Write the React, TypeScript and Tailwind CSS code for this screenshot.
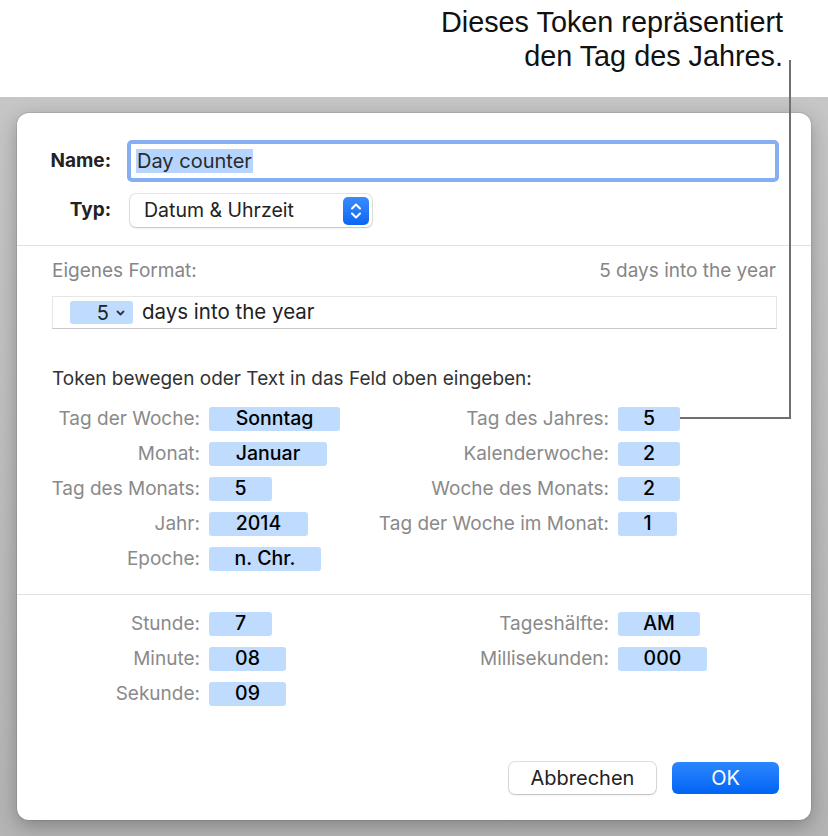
import React from "react";

const font = { fontFamily: "Inter, 'Liberation Sans', sans-serif" };

function Token({ text, w }: { text: string; w: number }) {
  return (
    <div
      className="h-[24px] rounded-[3px] bg-[#bfdbfe] flex items-center justify-center text-[19.5px] font-medium text-black leading-none"
      style={{ width: w }}
    >
      {text}
    </div>
  );
}

function Row({ label, token, w, labelW }: { label: string; token: string; w: number; labelW: number }) {
  return (
    <div className="flex items-center h-[24px]">
      <div className="text-right text-[19px] text-[#8a8a8a] pr-[9px] whitespace-nowrap" style={{ width: labelW + 9 }}>
        {label}
      </div>
      <Token text={token} w={w} />
    </div>
  );
}

export default function App() {
  const leftRows: [string, string, number][] = [
    ["Tag der Woche:", "Sonntag", 131],
    ["Monat:", "Januar", 118],
    ["Tag des Monats:", "5", 63],
    ["Jahr:", "2014", 99],
    ["Epoche:", "n. Chr.", 112],
  ];
  const rightRows: [string, string, number][] = [
    ["Tag des Jahres:", "5", 62],
    ["Kalenderwoche:", "2", 62],
    ["Woche des Monats:", "2", 62],
    ["Tag der Woche im Monat:", "1", 59],
  ];
  const leftTime: [string, string, number][] = [
    ["Stunde:", "7", 63],
    ["Minute:", "08", 77],
    ["Sekunde:", "09", 77],
  ];
  const rightTime: [string, string, number][] = [
    ["Tageshälfte:", "AM", 82],
    ["Millisekunden:", "000", 89],
  ];

  return (
    <div className="relative w-[828px] h-[836px] bg-white overflow-hidden" style={font}>
      {/* Callout text */}
      <div
        className="h-[97px] flex flex-col items-end pr-[45px] pt-[5px] text-[28.8px] leading-[34px] text-[#111]"
        style={{ fontFamily: "'Liberation Sans', Arial, sans-serif" }}
      >
        <div>Dieses Token repräsentiert</div>
        <div>den Tag des Jahres.</div>
      </div>

      {/* Gray backdrop */}
      <div className="h-[739px] bg-gradient-to-b from-[#c6c6c6] to-[#b4b4b4] pt-[16px] pl-[17px]">
        <div className="w-[794px] h-[707px] bg-white rounded-[12px] shadow-[0_6px_20px_rgba(0,0,0,0.28),0_0_0_1px_rgba(0,0,0,0.08)] flex flex-col pt-[27px] pb-[26px]">
          {/* Name */}
          <div className="flex items-center h-[42px]">
            <div className="w-[94px] text-right text-[19px] font-bold text-[#222]">Name:</div>
            <div className="ml-[16px] w-[652px] h-[42px] rounded-[5px] border-[4px] border-[#86aef2] bg-white flex items-center pl-[5px]">
              <span className="bg-[#b5d5fe] text-[20px] text-[#2a2a2a] leading-[24px] px-[1px]">Day counter</span>
            </div>
          </div>
          {/* Typ */}
          <div className="flex items-center h-[33px] mt-[12px]">
            <div className="w-[94px] text-right text-[19px] font-bold text-[#222]">Typ:</div>
            <div className="ml-[19px] w-[242px] h-[33px] rounded-[6px] bg-white shadow-[0_0_0_1px_rgba(0,0,0,0.1),0_1px_2px_rgba(0,0,0,0.15)] flex items-center justify-between pl-[14px] pr-[3px]">
              <span className="text-[19.5px] text-[#222]">Datum &amp; Uhrzeit</span>
              <div className="w-[26px] h-[28px] rounded-[5px] bg-gradient-to-b from-[#3a8cfb] to-[#0a66f5] flex items-center justify-center">
                <svg width="14" height="20" viewBox="0 0 14 20" fill="none" stroke="white" strokeWidth="2" strokeLinecap="round" strokeLinejoin="round">
                  <path d="M3 7.5 L7 3.5 L11 7.5" />
                  <path d="M3 12.5 L7 16.5 L11 12.5" />
                </svg>
              </div>
            </div>
          </div>

          <div className="mt-[18px] h-px bg-[#e2e2e2]" />

          {/* Eigenes Format */}
          <div className="mt-[14px] px-[35px] flex justify-between text-[19px] leading-[22px] text-[#868686]">
            <span>Eigenes Format:</span>
            <span>5 days into the year</span>
          </div>
          <div className="mt-[14px] ml-[35px] w-[725px] h-[33px] border border-[#e6e6e6] border-b-[#c8c8c8] bg-white flex items-center pl-[17px]">
            <div className="w-[63px] h-[23px] rounded-[3px] bg-[#bfdbfe] flex items-center justify-end pr-[8px] gap-[7px]">
              <span className="text-[20px] text-[#222] leading-none">5</span>
              <svg width="9" height="6" viewBox="0 0 9 6" fill="none" stroke="#333" strokeWidth="1.8" strokeLinecap="round" strokeLinejoin="round">
                <path d="M1.5 1.5 L4.5 4.5 L7.5 1.5" />
              </svg>
            </div>
            <span className="ml-[9px] text-[20.5px] text-[#222]">days into the year</span>
          </div>

          <div className="mt-[39px] px-[35px] text-[19px] leading-[22px] text-[#333]">
            Token bewegen oder Text in das Feld oben eingeben:
          </div>

          {/* Token grid */}
          <div className="mt-[17px] flex">
            <div className="w-[343px] flex flex-col gap-[11px]">
              {leftRows.map(([l, t, w]) => (
                <Row key={l} label={l} token={t} w={w} labelW={183} />
              ))}
            </div>
            <div className="flex flex-col gap-[11px]">
              {rightRows.map(([l, t, w]) => (
                <Row key={l} label={l} token={t} w={w} labelW={249} />
              ))}
            </div>
          </div>

          <div className="mt-[23px] h-px bg-[#e2e2e2]" />

          <div className="mt-[17px] flex">
            <div className="w-[343px] flex flex-col gap-[11px]">
              {leftTime.map(([l, t, w]) => (
                <Row key={l} label={l} token={t} w={w} labelW={183} />
              ))}
            </div>
            <div className="flex flex-col gap-[11px]">
              {rightTime.map(([l, t, w]) => (
                <Row key={l} label={l} token={t} w={w} labelW={249} />
              ))}
            </div>
          </div>

          {/* Buttons */}
          <div className="mt-auto flex justify-end gap-[16px] pr-[32px]">
            <button className="w-[147px] h-[32px] rounded-[6px] bg-white shadow-[0_0_0_1px_rgba(0,0,0,0.12),0_1px_2px_rgba(0,0,0,0.15)] text-[20px] text-[#222]">
              Abbrechen
            </button>
            <button className="w-[107px] h-[32px] rounded-[6px] bg-gradient-to-b from-[#2b87ff] to-[#0063f5] text-[20px] text-white">
              OK
            </button>
          </div>
        </div>
      </div>

      {/* Callout line */}
      <div className="absolute left-[789px] top-[60px] w-[2px] h-[359px] bg-[#707070]" />
      <div className="absolute left-[680px] top-[417px] w-[111px] h-[2px] bg-[#707070]" />
    </div>
  );
}
